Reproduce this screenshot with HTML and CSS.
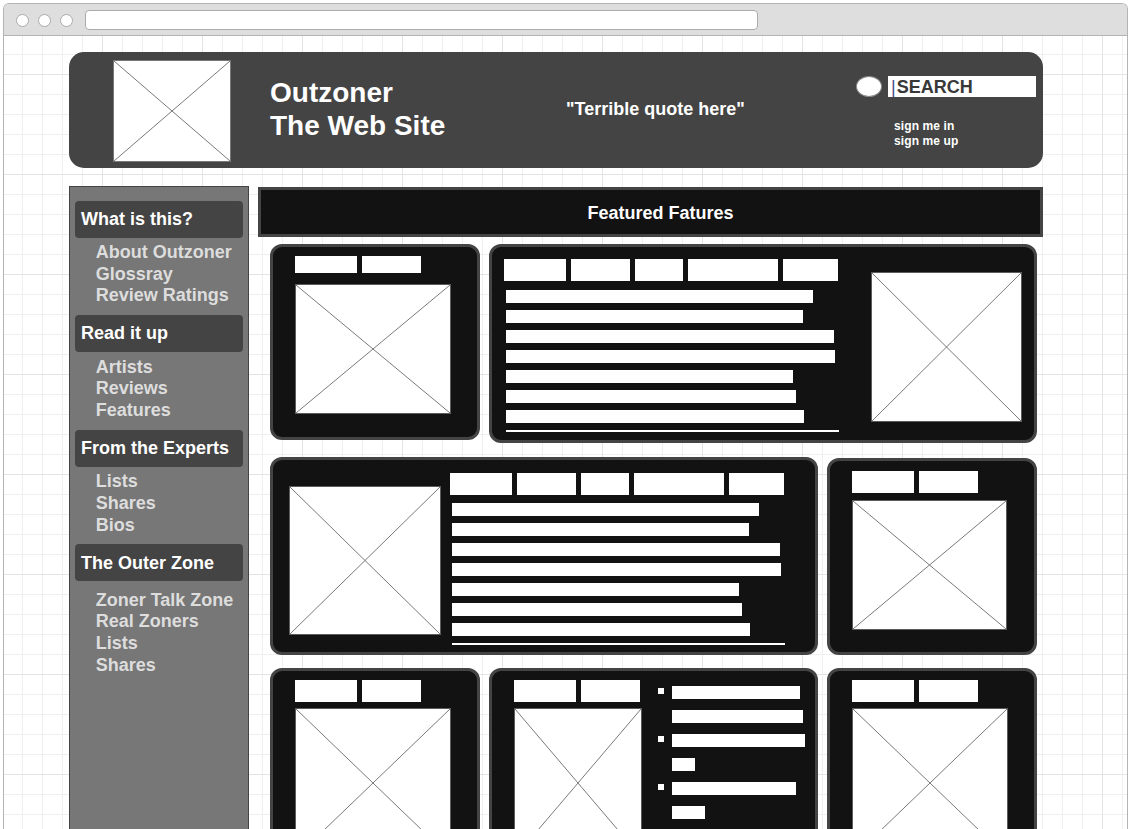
FILE: index.html
```html
<!DOCTYPE html>
<html lang="en">
<head>
<meta charset="utf-8">
<title>Outzoner - The Web Site</title>
<link rel="stylesheet" href="styles.css">
</head>
<body>
<div class="window">
  <div class="chrome">
    <span class="dot"></span><span class="dot"></span><span class="dot"></span>
    <div class="address"></div>
  </div>
  <div class="viewport">
    <div class="site">
      <header class="masthead">
        <div class="ph logo"><svg viewBox="0 0 100 100" preserveAspectRatio="none"><line x1="0" y1="0" x2="100" y2="100"/><line x1="100" y1="0" x2="0" y2="100"/></svg></div>
        <div class="title">Outzoner<br>The Web Site</div>
        <div class="quote">"Terrible quote here"</div>
        <div class="account">
          <div class="search-row">
            <span class="search-btn"></span>
            <div class="search-box"><span class="caret">|</span>SEARCH</div>
          </div>
          <div class="sign">sign me in<br>sign me up</div>
        </div>
      </header>

      <div class="body-row">
        <nav class="sidebar">
          <div class="nav-head">What is this?</div>
          <ul class="nav-links">
            <li>About Outzoner</li>
            <li>Glossray</li>
            <li>Review Ratings</li>
          </ul>
          <div class="nav-head">Read it up</div>
          <ul class="nav-links">
            <li>Artists</li>
            <li>Reviews</li>
            <li>Features</li>
          </ul>
          <div class="nav-head">From the Experts</div>
          <ul class="nav-links">
            <li>Lists</li>
            <li>Shares</li>
            <li>Bios</li>
          </ul>
          <div class="nav-head">The Outer Zone</div>
          <ul class="nav-links nav-links-last">
            <li>Zoner Talk Zone</li>
            <li>Real Zoners</li>
            <li>Lists</li>
            <li>Shares</li>
          </ul>
        </nav>

        <main class="main">
          <div class="featured">Featured Fatures</div>
          <div class="cards">
            <section class="card card-a">
              <div class="tabs tabs-thin"><span class="tab"></span><span class="tab"></span></div>
              <div class="ph img-a"><svg viewBox="0 0 100 100" preserveAspectRatio="none"><line x1="0" y1="0" x2="100" y2="100"/><line x1="100" y1="0" x2="0" y2="100"/></svg></div>
            </section>

            <section class="card card-b">
              <div class="col-text">
                <div class="tabs"><span class="tab"></span><span class="tab"></span><span class="tab"></span><span class="tab"></span><span class="tab"></span></div>
                <div class="bars bars-b">
                  <div class="bar" style="width:307px"></div>
                  <div class="bar" style="width:297px"></div>
                  <div class="bar" style="width:328px"></div>
                  <div class="bar" style="width:329px"></div>
                  <div class="bar" style="width:287px"></div>
                  <div class="bar" style="width:290px"></div>
                  <div class="bar" style="width:298px"></div>
                  <div class="rule"></div>
                </div>
              </div>
              <div class="ph img-b"><svg viewBox="0 0 100 100" preserveAspectRatio="none"><line x1="0" y1="0" x2="100" y2="100"/><line x1="100" y1="0" x2="0" y2="100"/></svg></div>
            </section>

            <section class="card card-c">
              <div class="ph img-c"><svg viewBox="0 0 100 100" preserveAspectRatio="none"><line x1="0" y1="0" x2="100" y2="100"/><line x1="100" y1="0" x2="0" y2="100"/></svg></div>
              <div class="col-text col-text-c">
                <div class="tabs"><span class="tab"></span><span class="tab"></span><span class="tab"></span><span class="tab"></span><span class="tab"></span></div>
                <div class="bars bars-c">
                  <div class="bar" style="width:307px"></div>
                  <div class="bar" style="width:297px"></div>
                  <div class="bar" style="width:328px"></div>
                  <div class="bar" style="width:329px"></div>
                  <div class="bar" style="width:287px"></div>
                  <div class="bar" style="width:290px"></div>
                  <div class="bar" style="width:298px"></div>
                  <div class="rule"></div>
                </div>
              </div>
            </section>

            <section class="card card-d">
              <div class="tabs"><span class="tab"></span><span class="tab"></span></div>
              <div class="ph img-d"><svg viewBox="0 0 100 100" preserveAspectRatio="none"><line x1="0" y1="0" x2="100" y2="100"/><line x1="100" y1="0" x2="0" y2="100"/></svg></div>
            </section>

            <section class="card card-e">
              <div class="tabs"><span class="tab"></span><span class="tab"></span></div>
              <div class="ph img-e"><svg viewBox="0 0 100 100" preserveAspectRatio="none"><line x1="0" y1="0" x2="100" y2="100"/><line x1="100" y1="0" x2="0" y2="100"/></svg></div>
            </section>

            <section class="card card-f">
              <div class="col-f">
                <div class="tabs"><span class="tab"></span><span class="tab"></span></div>
                <div class="ph img-f"><svg viewBox="0 0 100 100" preserveAspectRatio="none"><line x1="0" y1="0" x2="100" y2="100"/><line x1="100" y1="0" x2="0" y2="100"/></svg></div>
              </div>
              <ul class="bullets">
                <li><span class="sq"></span><div class="lines"><div class="bar-f" style="width:128px"></div><div class="bar-f" style="width:131px"></div></div></li>
                <li><span class="sq"></span><div class="lines"><div class="bar-f" style="width:133px"></div><div class="bar-f" style="width:23px"></div></div></li>
                <li><span class="sq"></span><div class="lines"><div class="bar-f" style="width:124px"></div><div class="bar-f" style="width:33px"></div></div></li>
              </ul>
            </section>

            <section class="card card-g">
              <div class="tabs"><span class="tab"></span><span class="tab"></span></div>
              <div class="ph img-e"><svg viewBox="0 0 100 100" preserveAspectRatio="none"><line x1="0" y1="0" x2="100" y2="100"/><line x1="100" y1="0" x2="0" y2="100"/></svg></div>
            </section>
          </div>
        </main>
      </div>
    </div>
  </div>
</div>
</body>
</html>
```

FILE: styles.css
```css
html, body {
  margin: 0;
  padding: 0;
  height: 100%;
  overflow: hidden;
  background: #ffffff;
}

body {
  font-family: "Liberation Sans", Arial, sans-serif;
}

/* ---------- browser frame ---------- */
.window {
  margin: 3px 0 0 3px;
  width: 1125px;
  height: 826px;
  box-sizing: border-box;
  border: 1px solid #b4b4b4;
  border-bottom: none;
  border-radius: 6px 6px 0 0;
  overflow: hidden;
  display: flex;
  flex-direction: column;
}

.chrome {
  flex: none;
  height: 31px;
  background: #dedede;
  border-bottom: 1px solid #b4b4b4;
  display: flex;
  align-items: flex-start;
  padding-left: 12px;
}

.dot {
  width: 13px;
  height: 13px;
  box-sizing: border-box;
  border: 1px solid #ababab;
  border-radius: 50%;
  background: #ffffff;
  margin-top: 9.5px;
}

.dot + .dot {
  margin-left: 9px;
}

.address {
  margin: 6px 0 0 12px;
  width: 673px;
  height: 20px;
  box-sizing: border-box;
  border: 1px solid #ababab;
  border-radius: 4px;
  background: #ffffff;
}

.viewport {
  flex: 1;
  overflow: hidden;
  background-color: #ffffff;
  background-image:
    linear-gradient(to right, #e4e4e4 1px, transparent 1px),
    linear-gradient(to bottom, #e4e4e4 1px, transparent 1px),
    linear-gradient(to right, #efefef 1px, transparent 1px),
    linear-gradient(to bottom, #efefef 1px, transparent 1px);
  background-size: 100px 100px, 100px 100px, 20px 20px, 20px 20px;
  background-position: 98px 0, 0 38px, 18px 0, 0 18px;
}

.site {
  margin-left: 65px;
  padding-top: 16px;
  width: 974px;
}

/* ---------- placeholder image ---------- */
.ph {
  flex: none;
  box-sizing: border-box;
  background: #ffffff;
  border: 1px solid #5c5c5c;
}

.ph svg {
  display: block;
  width: 100%;
  height: 100%;
}

.ph line {
  stroke: #7a7a7a;
  stroke-width: 1;
  vector-effect: non-scaling-stroke;
}

/* ---------- masthead ---------- */
.masthead {
  height: 116px;
  box-sizing: border-box;
  background: #444444;
  border-radius: 15px;
  display: flex;
  align-items: flex-start;
  color: #ffffff;
}

.logo {
  width: 118px;
  height: 102px;
  margin: 8px 0 0 44px;
  border-color: #777777;
}

.title {
  flex: none;
  width: 296px;
  margin: 24px 0 0 39px;
  font-size: 28px;
  line-height: 33px;
  font-weight: bold;
}

.quote {
  margin-top: 46.6px;
  font-size: 18px;
  line-height: 21px;
  font-weight: bold;
}

.account {
  margin: 24px 7px 0 auto;
}

.search-row {
  display: flex;
  align-items: center;
}

.search-btn {
  width: 26px;
  height: 21px;
  box-sizing: border-box;
  border: 1px solid #8a8a8a;
  border-radius: 50%;
  background: #ffffff;
}

.search-box {
  margin-left: 6px;
  width: 148px;
  height: 21px;
  box-sizing: border-box;
  padding: 1px 0 0 3px;
  background: #ffffff;
  color: #383838;
  font-size: 18px;
  line-height: 20px;
  font-weight: bold;
  overflow: hidden;
}

.caret {
  color: #4a4a8c;
  font-weight: normal;
  margin-right: 1px;
}

.sign {
  margin: 21.8px 0 0 38px;
  font-size: 12px;
  line-height: 15px;
  font-weight: bold;
  letter-spacing: 0.1px;
}

/* ---------- body ---------- */
.body-row {
  display: flex;
  align-items: stretch;
}

.sidebar {
  flex: none;
  width: 180px;
  box-sizing: border-box;
  margin-top: 18px;
  padding: 13.7px 5px 0;
  background: #777777;
  border: 1px solid #444444;
  border-bottom: none;
}

.nav-head {
  height: 37px;
  box-sizing: border-box;
  padding: 1px 0 0 6px;
  display: flex;
  align-items: center;
  background: #444444;
  border-radius: 4px;
  color: #ffffff;
  font-size: 18px;
  line-height: 21.6px;
  font-weight: bold;
}

.nav-links {
  list-style: none;
  margin: 4.3px 0 8.2px;
  padding: 0 0 0 20.7px;
  color: #dddddd;
  font-size: 18px;
  line-height: 21.7px;
  font-weight: bold;
}

.nav-links-last {
  margin-top: 8.3px;
}

.main {
  flex: none;
  width: 785px;
  margin: 19px 0 0 9px;
}

.featured {
  height: 50px;
  box-sizing: border-box;
  border: 3px solid #444444;
  background: #121212;
  color: #ffffff;
  display: flex;
  align-items: center;
  justify-content: center;
  padding: 2px 0 0 20px;
  font-size: 18px;
  font-weight: bold;
}

.cards {
  margin: 7px 6px 0 12px;
  display: grid;
  grid-template-columns: 210px 329px 210px;
  grid-template-rows: 200px 198px 200px;
  column-gap: 9px;
  row-gap: 13px;
}

.card {
  box-sizing: border-box;
  border: 3px solid #444444;
  border-radius: 12px;
  background: #121212;
}

.tabs {
  display: flex;
  gap: 5px;
}

.tab {
  height: 22px;
  background: #ffffff;
}

.tab:nth-child(1) { width: 62px; }
.tab:nth-child(2) { width: 59px; }
.tab:nth-child(3) { width: 48px; }
.tab:nth-child(4) { width: 90px; }
.tab:nth-child(5) { width: 55px; }

.tabs-thin .tab {
  height: 17px;
}

.bars {
  margin-left: 2px;
}

.bar {
  height: 13px;
  margin-bottom: 7px;
  background: #ffffff;
}

.rule {
  width: 333px;
  height: 2px;
  background: #ffffff;
}

/* card A */
.card-a {
  grid-column: 1;
  grid-row: 1;
  align-self: start;
  height: 196px;
  padding: 9px 0 0 22px;
}

.img-a {
  margin-top: 11px;
  width: 156px;
  height: 130px;
}

/* card B */
.card-b {
  grid-column: 2 / 4;
  grid-row: 1;
  height: 199px;
  display: flex;
  padding: 12px 12px 0 12px;
}

.col-text {
  width: 335px;
}

.bars-b {
  margin-top: 9px;
}

.img-b {
  margin: 13px 0 0 auto;
  width: 151px;
  height: 150px;
}

/* card C */
.card-c {
  grid-column: 1 / 3;
  grid-row: 2;
  height: 198px;
  display: flex;
  padding: 13px 0 0 16px;
}

.img-c {
  margin-top: 13px;
  width: 152px;
  height: 149px;
}

.col-text-c {
  margin-left: 9px;
}

.bars-c {
  margin-top: 8px;
}

/* card D */
.card-d {
  grid-column: 3;
  grid-row: 2;
  align-self: end;
  height: 197px;
  padding: 10px 0 0 22px;
}

.img-d {
  margin-top: 7px;
  width: 155px;
  height: 130px;
}

/* bottom row */
.card-e,
.card-g {
  grid-row: 3;
  height: 196px;
  padding: 9px 0 0 22px;
}

.card-e { grid-column: 1; }
.card-g { grid-column: 3; }

.img-e {
  margin-top: 6px;
  width: 156px;
  height: 150px;
}

.card-f {
  grid-column: 2;
  grid-row: 3;
  height: 196px;
  display: flex;
  padding: 9px 0 0 22px;
}

.col-f {
  flex: none;
}

.img-f {
  margin-top: 6px;
  width: 128px;
  height: 150px;
}

.bullets {
  list-style: none;
  margin: 6px 0 0 15px;
  padding: 0;
}

.bullets li {
  display: flex;
  align-items: flex-start;
}

.sq {
  flex: none;
  width: 6px;
  height: 6px;
  margin: 2px 0 0 1px;
  background: #ffffff;
}

.lines {
  margin-left: 8px;
}

.bar-f {
  height: 13px;
  margin-bottom: 11px;
  background: #ffffff;
}
```
